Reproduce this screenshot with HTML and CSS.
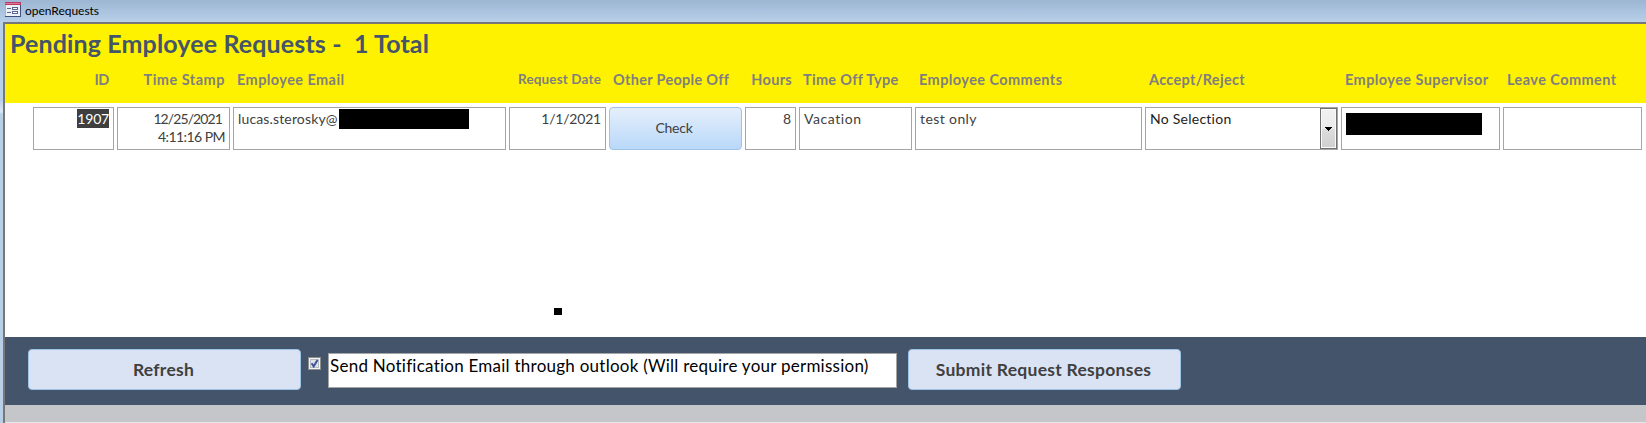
FILE: index.html
```html
<!DOCTYPE html>
<html lang="en">
<head>
<meta charset="utf-8">
<title>openRequests</title>
<link rel="stylesheet" href="styles.css">
</head>
<body>
<div class="window">
  <header class="titlebar">
    <svg class="form-icon" width="16" height="15" viewBox="0 0 16 15" shape-rendering="crispEdges">
      <rect width="16" height="15" fill="#a9b1d0"/>
      <rect x="1" y="3" width="14" height="11" fill="#eef0f8"/>
      <rect width="16" height="3" fill="#b93a62"/>
      <rect y="1" width="15" height="1" fill="#d97a97"/>
      <rect x="15" y="3" width="1" height="12" fill="#3f4f80"/>
      <rect y="14" width="16" height="1" fill="#3f4f80"/>
      <path d="M2 6h4v1H2zM2 10h4v1H2z" fill="#59658f"/>
      <path d="M7.500 5.500h5v2h-5zM7.500 9.500h5v2h-5z" fill="#fff" stroke="#59658f"/>
    </svg>
    <span class="window-name">openRequests</span>
  </header>
  <main class="form">
    <section class="form-header">
      <h1 class="heading">Pending Employee Requests -&nbsp; 1 Total</h1>
      <div class="columns labels">
        <span class="label num id-label">ID</span>
        <span class="label num stamp-label">Time Stamp</span>
        <span class="label">Employee Email</span>
        <span class="label num date-label">Request Date</span>
        <span class="label people-label">Other People Off</span>
        <span class="label num hours-label">Hours</span>
        <span class="label people-label">Time Off Type</span>
        <span class="label">Employee Comments</span>
        <span class="label people-label">Accept/Reject</span>
        <span class="label">Employee Supervisor</span>
        <span class="label">Leave Comment</span>
      </div>
    </section>
    <section class="detail">
      <div class="columns record">
        <div class="field num"><span class="selected">1907</span></div>
        <div class="field num stamp"><span class="stamp-date">12/25/2021</span><span>4:11:16 PM</span></div>
        <div class="field email"><span>lucas.sterosky@</span><span class="redacted email-mask"></span></div>
        <div class="field num date">1/1/2021</div>
        <button class="check">Check</button>
        <div class="field num hours">8</div>
        <div class="field vacation">Vacation</div>
        <div class="field comment">test only</div>
        <div class="field combo"><span class="combo-value">No Selection</span><span class="combo-arrow"><svg width="7" height="4" viewBox="0 0 7 4" shape-rendering="crispEdges"><path d="M0 0h7v1h-1v1h-1v1h-1v1h-1v-1h-1v-1h-1v-1h-1z"/></svg></span></div>
        <div class="field supervisor"><span class="redacted supervisor-mask"></span></div>
        <div class="field"></div>
      </div>
      <span class="dot"></span>
    </section>
    <footer class="form-footer">
      <button class="action">Refresh</button>
      <svg class="checkbox" width="13" height="13" viewBox="0 0 13 13">
        <rect x=".5" y=".5" width="12" height="12" fill="#f4f4f4" stroke="#8e8f8f"/>
        <rect x="2.500" y="2.500" width="8" height="8" fill="#dfe2e8" stroke="#b6bcc6"/>
        <path d="M3.600 6.200L5.700 9.300L9.500 3" fill="none" stroke="#3f5596" stroke-width="2"/>
      </svg>
      <div class="notice">Send Notification Email through outlook (Will require your permission)</div>
      <button class="action submit">Submit Request Responses</button>
    </footer>
    <div class="base"></div>
  </main>
</div>
</body>
</html>
```
FILE: styles.css
```css
* { box-sizing: border-box; }
body {
  margin: 0;
  overflow: hidden;
  font-family: Lato, Carlito, sans-serif;
}
.window {
  width: 1646px;
  height: 423px;
  display: flex;
  flex-direction: column;
  background: linear-gradient(#9cb6d3 0, #b8cfe8 22px, #b8cfe8 100px, #dbe7f4 112px, #b8cfe8 114px);
}
.titlebar {
  height: 22px;
  flex: none;
  display: flex;
  gap: 4px;
  padding: 2px 0 0 5px;
}
.form-icon { flex: none; }
.window-name {
  font-size: 12px;
  line-height: 17px;
  letter-spacing: -.03px;
  color: #000;
}
.form {
  flex: 1;
  margin-left: 3px;
  border: solid #777;
  border-width: 2px 0 0 2px;
  display: flex;
  flex-direction: column;
}
.form-header {
  height: 79px;
  background: #fff200;
  padding-top: 5px;
}
.heading {
  margin: 0 0 13px 5px;
  font-size: 25px;
  line-height: 29px;
  letter-spacing: .13px;
  color: #44546a;
  white-space: pre;
}
.columns {
  display: grid;
  grid-template-columns: 81px 113px 273px 97px 133px 51px 113px 227px 193px 159px 139px;
  column-gap: 3px;
  padding-left: 28px;
}
.label {
  padding-left: 4px;
  font-size: 14.500px;
  font-weight: 700;
  line-height: 18px;
  letter-spacing: .42px;
  color: #7f7f7f;
  white-space: nowrap;
}
.people-label { letter-spacing: .3px; }
.num { text-align: right; }
.id-label { padding-right: 5px; letter-spacing: -.4px; }
.stamp-label { padding-right: 5px; letter-spacing: .5px; }
.date-label {
  margin-top: -1px;
  padding: 0 5px 0 0;
  font-size: 13.500px;
  letter-spacing: .15px;
}
.hours-label { padding: 0 4px 0 0; letter-spacing: .3px; }
.detail {
  height: 234px;
  padding-top: 4px;
  background: #fff;
}
.record { height: 43px; }
.field {
  border: 1px solid #a5a5a5;
  padding: 2px 4px 0;
  font-size: 14px;
  line-height: 18px;
  color: #404040;
  white-space: nowrap;
}
.selected {
  display: inline-block;
  height: 19px;
  margin-top: -1px;
  line-height: 20px;
  background: #3f3f3f;
  color: #fff;
  letter-spacing: -.2px;
}
.stamp {
  display: flex;
  flex-direction: column;
  line-height: 17.500px;
  letter-spacing: -.55px;
}
.stamp-date { padding-right: 3px; letter-spacing: -.9px; }
.email {
  display: flex;
  padding: 1px 0 0 4px;
  line-height: 20px;
  letter-spacing: .15px;
}
.redacted { background: #000; }
.email-mask { width: 130px; height: 20px; margin-left: auto; margin-right: 36px; }
.date { letter-spacing: -.2px; }
.check {
  border: 1px solid #9dc3e6;
  border-radius: 4px;
  padding: 0 3px 2px 0;
  background: linear-gradient(#e5effb, #b9d8f9);
  font: 14px Lato, Carlito, sans-serif;
  letter-spacing: -.25px;
  color: #404040;
}
.vacation { letter-spacing: .55px; }
.comment { letter-spacing: .4px; }
.combo {
  display: flex;
  justify-content: space-between;
  padding: 0 0 0 4px;
  color: #222;
  letter-spacing: .25px;
}
.combo-value { padding-top: 2px; }
.combo-arrow {
  width: 17px;
  border: 1px solid #707070;
  box-shadow: inset 0 0 0 1px #fafafa;
  background: linear-gradient(#f2f2f2 0, #ebebeb 50%, #dddddd 51%, #cfcfcf);
  display: flex;
  align-items: center;
  justify-content: center;
}
.supervisor { padding-top: 5px; }
.supervisor-mask { display: block; width: 136px; height: 22px; }
.dot {
  display: block;
  width: 8px;
  height: 7px;
  margin: 158px 0 0 549px;
  background: #000;
}
.form-footer {
  height: 68px;
  display: flex;
  align-items: flex-start;
  padding: 12px 0 0 23px;
  background: #44546a;
}
.action {
  width: 273px;
  height: 41px;
  border: 1px solid #9dc3e6;
  border-radius: 4px;
  padding: 0 2px 1px 0;
  background: #dae3f3;
  font: 700 17.500px Lato, Carlito, sans-serif;
  letter-spacing: .27px;
  color: #404040;
}
.checkbox { margin: 8px 7px 0; flex: none; }
.notice {
  width: 569px;
  height: 35px;
  margin: 4px 11px 0 0;
  border: 1px solid #a5a5a5;
  padding-left: 1px;
  background: #fff;
  font-size: 17px;
  line-height: 24px;
  letter-spacing: .25px;
  color: #000;
  white-space: nowrap;
}
.base {
  height: 18px;
  background: #c5c6ca;
  border-bottom: 1px solid #e6e7ea;
}
```
